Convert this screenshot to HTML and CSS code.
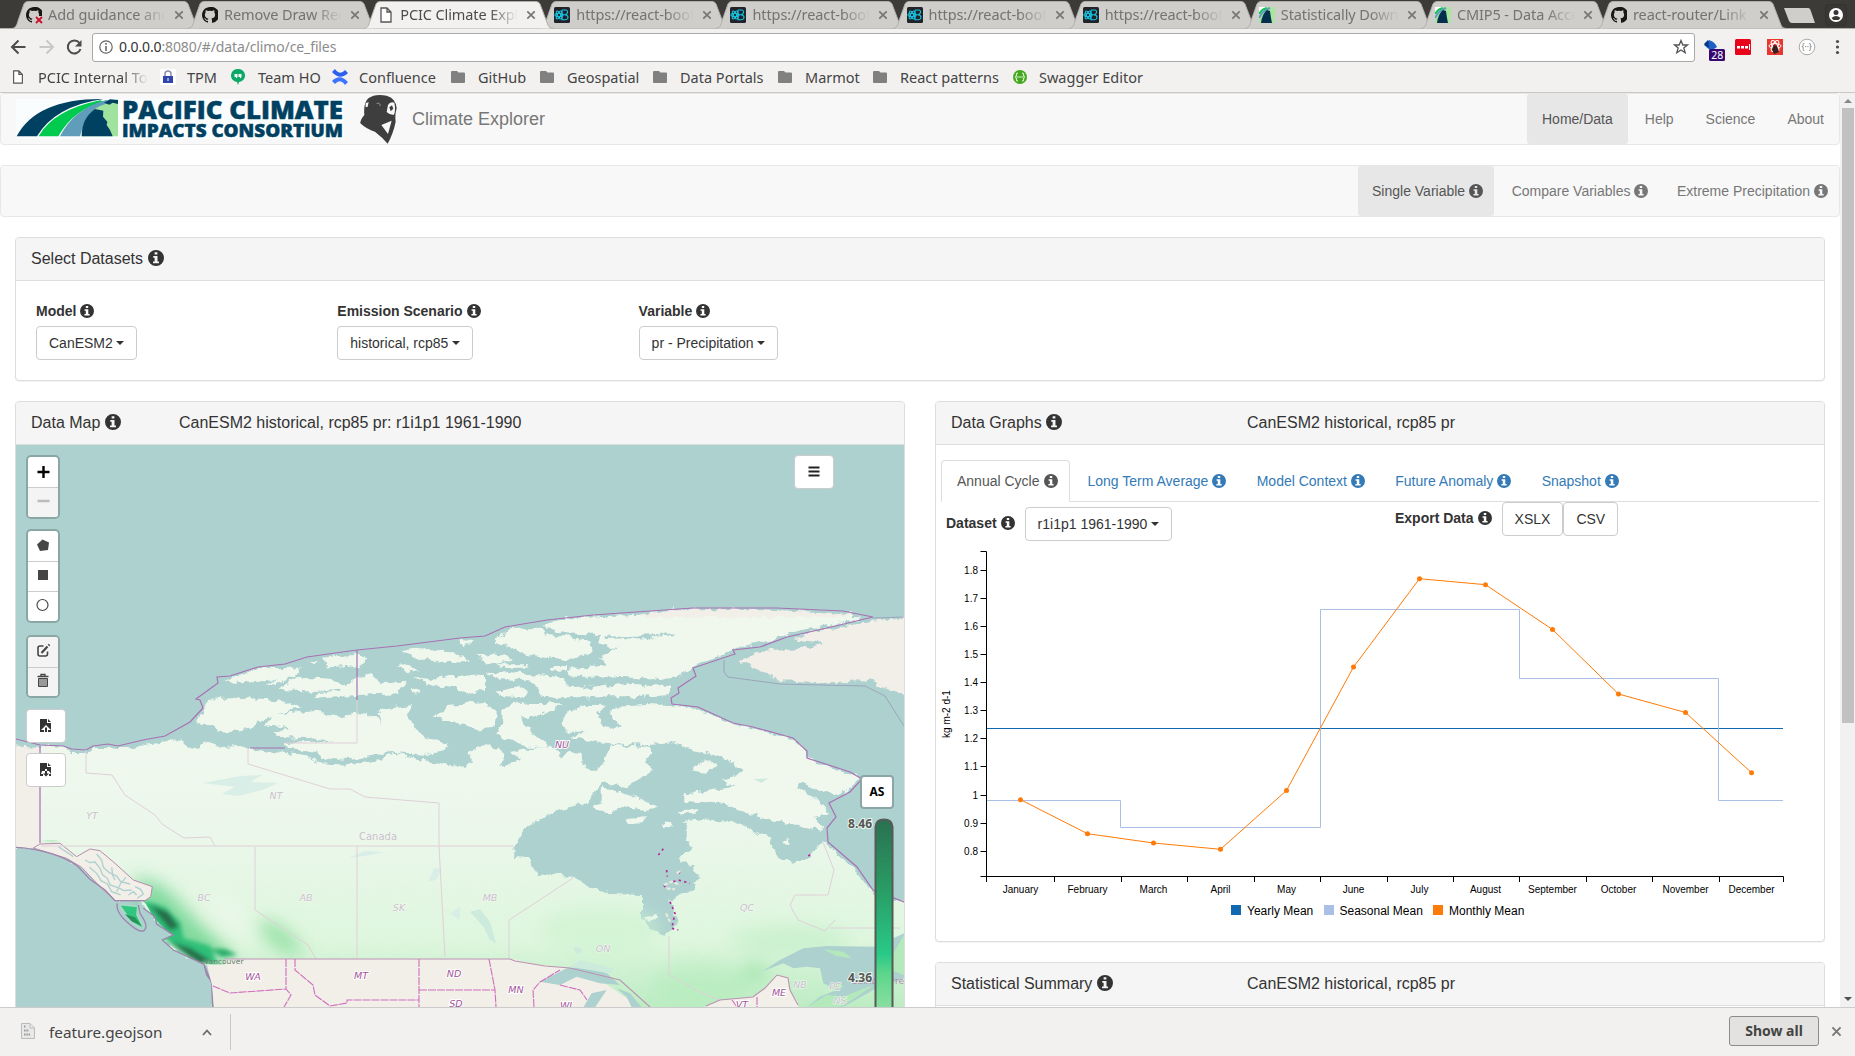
FILE: index.html
```html
<!DOCTYPE html>
<html lang="en">
<head>
<meta charset="utf-8">
<title>PCIC Climate Explorer</title>
<link rel="stylesheet" href="styles.css">
</head>
<body>
<svg class="defs" width="0" height="0">
  <symbol id="tab" viewBox="0 0 190 28"><path d="M0 27.5C5 27 5 22 7 17L12 3Q13 .5 16 .5H172Q175 .5 176 3L184 24Q185 27.5 189 27.5"/></symbol>
  <symbol id="info" viewBox="0 0 14 14"><path fill="currentColor" fill-rule="evenodd" d="M7 0a7 7 0 1 0 0 14A7 7 0 0 0 7 0ZM5.8 2h2.4v2H5.8ZM4.6 5.2h3.7v4.9h1.3v1.5H4.4v-1.5h1.4V6.7H4.6Z"/></symbol>
  <symbol id="x" viewBox="0 0 10 10"><path d="M1.3 1.3l7.4 7.4M8.7 1.3L1.3 8.7" stroke="#777" stroke-width="1.7"/></symbol>
  <symbol id="github" viewBox="0 0 16 16"><path fill="#191717" d="M8 0C3.6 0 0 3.6 0 8c0 3.5 2.3 6.500 5.500 7.600.4.100.500-.2.500-.4v-1.400c-2.200.500-2.700-1-2.700-1-.4-.9-.9-1.200-.9-1.200-.7-.5.1-.5.1-.5.800.1 1.200.8 1.200.8.7 1.300 1.900.9 2.300.7.1-.5.3-.9.500-1.100-1.800-.2-3.600-.9-3.600-4 0-.9.300-1.600.8-2.100-.1-.2-.4-1 .1-2.100 0 0 .7-.2 2.200.8a7.500 7.500 0 0 1 4 0c1.500-1 2.200-.8 2.200-.8.4 1.100.2 1.900.1 2.100.5.600.8 1.300.8 2.100 0 3.100-1.900 3.700-3.700 3.900.3.400.6.900.6 1.700v2.300c0 .2.100.5.600.4A8 8 0 0 0 8 0Z"/></symbol>
  <symbol id="react" viewBox="0 0 16 16"><rect width="16" height="16" rx="1.500" fill="#20232a"/><g fill="none" stroke="#16c4e0" stroke-width="1.100"><path d="M8 3H11.500Q14 3.200 13.500 5.500 13 7.500 11 7.700H8M11 7.700Q14.200 8 14 10.500 13.600 12.800 11 12.800H8V3"/><ellipse cx="5" cy="8" rx="4" ry="1.700"/><ellipse cx="5" cy="8" rx="4.500" ry="1.700" transform="rotate(60 5 8)"/><ellipse cx="5" cy="8" rx="4.500" ry="1.700" transform="rotate(-60 5 8)"/></g></symbol>
  <symbol id="pcic" viewBox="0 0 16 16"><rect width="16" height="16" fill="#a8e6a0"/><path fill="#fff" d="M0 0h8L0 12Z"/><path d="M0 7Q3 2 8 1" stroke="#08c94f" stroke-width="2" fill="none"/><path d="M0 11Q3 4 11 1" stroke="#5f9dbb" stroke-width="2" fill="none"/><path fill="#04304e" d="M2 16Q3 7 8 3L11 4 12 11 13 16Z"/></symbol>
  <symbol id="page" viewBox="0 0 12 16"><path fill="#fff" stroke="#555" stroke-width="1.300" d="M1 1H7L11 5V15H1ZM7 1V5H11"/></symbol>
  <symbol id="folder" viewBox="0 0 14 12"><path fill="#808080" d="M0 1Q0 0 1 0H6L7.500 1.500H13Q14 1.500 14 2.500V11Q14 12 13 12H1Q0 12 0 11Z"/></symbol>
</svg>
<div class="tabstrip">
  <div class="tab"><svg class="shape"><use href="#tab"/></svg><span class="fav"><svg><use href="#github"/></svg><svg class="fail" viewBox="0 0 8 8"><path d="M1 1l6 6M7 1L1 7" stroke="#c8102e" stroke-width="1.800"/></svg></span><span class="t">Add guidance and</span><svg class="close"><use href="#x"/></svg></div>
  <div class="tab"><svg class="shape"><use href="#tab"/></svg><span class="fav"><svg><use href="#github"/></svg></span><span class="t">Remove Draw Rec</span><svg class="close"><use href="#x"/></svg></div>
  <div class="tab active"><svg class="shape"><use href="#tab"/></svg><span class="fav"><svg><use href="#page"/></svg></span><span class="t">PCIC Climate Expl</span><svg class="close"><use href="#x"/></svg></div>
  <div class="tab"><svg class="shape"><use href="#tab"/></svg><span class="fav"><svg><use href="#react"/></svg></span><span class="t">https://react-boot</span><svg class="close"><use href="#x"/></svg></div>
  <div class="tab"><svg class="shape"><use href="#tab"/></svg><span class="fav"><svg><use href="#react"/></svg></span><span class="t">https://react-boot</span><svg class="close"><use href="#x"/></svg></div>
  <div class="tab"><svg class="shape"><use href="#tab"/></svg><span class="fav"><svg><use href="#react"/></svg></span><span class="t">https://react-boot</span><svg class="close"><use href="#x"/></svg></div>
  <div class="tab"><svg class="shape"><use href="#tab"/></svg><span class="fav"><svg><use href="#react"/></svg></span><span class="t">https://react-boot</span><svg class="close"><use href="#x"/></svg></div>
  <div class="tab"><svg class="shape"><use href="#tab"/></svg><span class="fav"><svg><use href="#pcic"/></svg></span><span class="t">Statistically Down</span><svg class="close"><use href="#x"/></svg></div>
  <div class="tab"><svg class="shape"><use href="#tab"/></svg><span class="fav"><svg><use href="#pcic"/></svg></span><span class="t">CMIP5 - Data Acce</span><svg class="close"><use href="#x"/></svg></div>
  <div class="tab"><svg class="shape"><use href="#tab"/></svg><span class="fav"><svg><use href="#github"/></svg></span><span class="t">react-router/Link</span><svg class="close"><use href="#x"/></svg></div>
  <svg class="newtab" viewBox="0 0 33 16"><path fill="#d0cecb" d="M1 0H25Q27 0 27.500 2L32 15H9Q7 15 6 13Z"/></svg>
  <svg class="user" viewBox="0 0 22 22"><rect x=".5" y=".5" width="21" height="21" rx="3" fill="#383733" stroke="#32312d"/><circle cx="11" cy="11" r="7" fill="#fff"/><circle cx="11" cy="8.500" r="2.500" fill="#383733"/><path d="M6.500 14Q11 10 15.500 14L13.500 16H8.500Z" fill="#383733"/></svg>
</div>
<div class="toolbar">
  <svg class="nav" viewBox="0 0 90 28" fill="none" stroke="#4c4c4c" stroke-width="2"><path d="M25 14H12M18 7.500L11.500 14 18 20.500"/><path stroke="#c9c8c6" d="M39 14H52M46 7.500L52.500 14 46 20.500"/><path d="M79 10A6.500 6.500 0 1 0 80 16"/><path fill="#4c4c4c" stroke="none" d="M81 7V13.500H74.500Z"/></svg>
  <div class="address"><svg viewBox="0 0 14 14"><circle cx="7" cy="7" r="6.200" fill="none" stroke="#666" stroke-width="1.200"/><path d="M7 3v1.700M7 6v5" stroke="#666" stroke-width="1.600"/></svg><span class="url"><b>0.0.0.0</b>:8080/#/data/climo/ce_files</span>
    <svg class="star" viewBox="0 0 16 16"><path fill="none" stroke="#555" stroke-width="1.300" d="M8 1.500L9.800 6H14.500L10.800 9 12.200 13.800 8 11 3.800 13.800 5.200 9 1.500 6H6.200Z"/></svg></div>
  <svg class="exts" viewBox="0 0 160 28"><path d="M9 12L14 7Q20 9 22 14L16 18Z" fill="#1d5fc4"/><path d="M9 11L13 7 14 15Z" fill="#08357e"/><rect x="14" y="16" width="16" height="12" rx="1.500" fill="#37096f"/><text x="16.300" y="26" font-size="10.500" fill="#fff" font-family="Noto Sans">28</text><rect x="40" y="6" width="16" height="16" rx="1.500" fill="#e8031a"/><path fill="#fff" d="M42 13h3v2.500h-3zM46 13h3v2.500h-3zM50 13h3v2.500h-3zM54 11h1v6h-1z"/><rect x="72" y="6" width="16" height="16" fill="#e8372f"/><g fill="none" stroke="#fff"><ellipse cx="80" cy="13" rx="6" ry="2.500"/><ellipse cx="80" cy="13" rx="6" ry="2.500" transform="rotate(60 80 13)"/><ellipse cx="80" cy="13" rx="6" ry="2.500" transform="rotate(120 80 13)"/></g><path fill="#33211f" d="M79 12l3 1 2 6-5 2-2-5z"/><circle cx="112" cy="14" r="7.800" fill="#fff" stroke="#aaa"/><text x="106.500" y="17" font-size="8" fill="#777" font-family="Noto Sans">{··}</text><g fill="#4c4c4c"><circle cx="142.500" cy="8.500" r="1.600"/><circle cx="142.500" cy="14" r="1.600"/><circle cx="142.500" cy="19.500" r="1.600"/></g></svg>
</div>
<div class="bookmarks">
  <span class="bm"><svg class="pg"><use href="#page"/></svg><span class="fade">PCIC Internal Tool</span></span>
  <span class="bm"><svg viewBox="0 0 16 16"><rect width="16" height="16" fill="#fff"/><path d="M5 8V5a3 3 0 0 1 6 0V8" fill="none" stroke="#8b8fae" stroke-width="1.500"/><rect x="3" y="7" width="10" height="7" fill="#3046aa"/><path d="M8 9v3" stroke="#fff"/></svg>TPM</span>
  <span class="bm"><svg viewBox="0 0 16 16"><path d="M7 0a6.500 6.500 0 0 1 1 13L7 16 6 13A6.500 6.500 0 0 1 7 0Z" fill="#0ba968"/><path fill="#fff" d="M3.500 5h3v3l-1.500 1.500V8H3.500ZM7.500 5h3v3L9 9.500V8H7.500Z"/></svg>Team HO</span>
  <span class="bm"><svg viewBox="0 0 16 16"><path d="M0 3L3 0Q8 7 13 1L16 4Q8 12 0 3Z" fill="#2c60ee"/><path d="M16 13L13 16Q8 9 3 15L0 12Q8 4 16 13Z" fill="#3c74ff"/></svg>Confluence</span>
  <span class="bm"><svg class="fo"><use href="#folder"/></svg>GitHub</span>
  <span class="bm"><svg class="fo"><use href="#folder"/></svg>Geospatial</span>
  <span class="bm"><svg class="fo"><use href="#folder"/></svg>Data Portals</span>
  <span class="bm"><svg class="fo"><use href="#folder"/></svg>Marmot</span>
  <span class="bm"><svg class="fo"><use href="#folder"/></svg>React patterns</span>
  <span class="bm"><svg viewBox="0 0 16 16"><circle cx="8" cy="8" r="7" fill="#45a71d"/><path d="M6 4Q4 4 4.500 6.500L3.500 8 4.500 9.500Q4 12 6 12M10 4Q12 4 11.500 6.500L12.500 8 11.500 9.500Q12 12 10 12M5 8H11" stroke="#d5efc8" fill="none" stroke-width="1.200"/></svg>Swagger Editor</span>
</div>
<div class="viewport">
<main>
  <nav class="navbar">
    <svg class="logo" viewBox="0 0 400 51" width="400" height="51">
      <rect x="16" y="5" width="328" height="40" fill="#fafdfe"/>
      <g transform="translate(0 -4) scale(.33333)">
        <path fill="#004162" d="M50 139Q110 25 310 27Q165 48 111 139Z"/>
        <path fill="#00cb4e" d="M116 139Q160 60 300 31L315 35Q220 57 175 139Z"/>
        <path fill="#5f9dbb" d="M180 139Q220 58 318 30L340 35Q260 58 240 139Z"/>
        <path fill="#9fe39f" d="M354 28V139H245Q252 70 300 48Z"/>
        <path fill="#004162" d="M245 139Q245 85 285 57L310 62 309 80 322 95 320 105 330 120 338 139ZM312 38L330 28 354 30V42L338 38 328 44Z"/>
      </g>
      <g fill="#004162" stroke="#004162" stroke-width=".5" font-family="Open Sans" font-weight="800"><text x="122" y="24.500" font-size="25.500" textLength="221" lengthAdjust="spacingAndGlyphs">PACIFIC CLIMATE</text><text x="122" y="42.500" font-size="18" textLength="221" lengthAdjust="spacingAndGlyphs">IMPACTS CONSORTIUM</text></g>
      <g transform="translate(0 -4) scale(.33333)"><path fill="#3e3e3e" d="M1105 25Q1125 10 1160 17 1188 25 1190 55 1184 75 1187 95 1180 130 1163 161 1148 143 1125 125 1100 118 1081 100 1080 90 1093 75 1090 38 1105 25Z"/><path fill="#f8f8f8" d="M1164 45Q1170 34 1183 38 1188 60 1182 74 1170 76 1160 66ZM1144 105L1175 92 1164 132ZM1097 40L1106 36 1103 50 1097 52Z"/><path fill="#3e3e3e" d="M1168 52L1176 46 1180 56 1172 64Z"/><path d="M1130 40Q1142 38 1140 48" stroke="#999" stroke-width="3" fill="none"/></g>
    </svg>
    <span class="brand">Climate Explorer</span>
    <div class="links"><a class="on">Home/Data</a><a>Help</a><a>Science</a><a>About</a></div>
  </nav>
  <nav class="navbar"><div class="links sub"><a class="on">Single Variable <svg class="i"><use href="#info"/></svg></a><a>Compare Variables <svg class="i"><use href="#info"/></svg></a><a>Extreme Precipitation <svg class="i"><use href="#info"/></svg></a></div></nav>
  <div class="content">
    <section class="panel select">
      <h4>Select Datasets <svg class="i"><use href="#info"/></svg></h4>
      <div class="selectors">
        <div><label>Model <svg class="i"><use href="#info"/></svg></label><button class="btn">CanESM2 <i class="caret"></i></button></div>
        <div><label>Emission Scenario <svg class="i"><use href="#info"/></svg></label><button class="btn">historical, rcp85 <i class="caret"></i></button></div>
        <div><label>Variable <svg class="i"><use href="#info"/></svg></label><button class="btn">pr - Precipitation <i class="caret"></i></button></div>
      </div>
    </section>
    <div class="columns">
      <section class="panel mapp">
        <h4><span class="c1">Data Map <svg class="i"><use href="#info"/></svg></span><span>CanESM2 historical, rcp85 pr: r1i1p1 1961-1990</span></h4>
        <div class="map">
          <svg class="canvas" viewBox="16 445 888 562" width="888" height="562">
            <defs>
              <linearGradient id="land" x1="0" y1="740" x2="0" y2="1007" gradientUnits="userSpaceOnUse"><stop offset="0" stop-color="#f0f8ee"/><stop offset=".35" stop-color="#ebf7ea"/><stop offset=".75" stop-color="#def6de"/><stop offset="1" stop-color="#bdecc3"/></linearGradient>
              <linearGradient id="bar" x1="0" y1="0" x2="0" y2="1"><stop offset="0" stop-color="#2a7151"/><stop offset=".35" stop-color="#289b63"/><stop offset=".7" stop-color="#29c988"/><stop offset=".8" stop-color="#5cd68b"/><stop offset="1" stop-color="#8fe0a4"/></linearGradient>
              <filter id="rough" x="0" y="0" width="1" height="1"><feTurbulence type="fractalNoise" baseFrequency=".13" numOctaves="3" seed="4"/><feDisplacementMap in="SourceGraphic" scale="8" xChannelSelector="R" yChannelSelector="G"/></filter>
              <filter id="soft" x="-.5" y="-.5" width="2" height="2"><feGaussianBlur stdDeviation="9"/></filter>
              <filter id="soft2" x="-.5" y="-.5" width="2" height="2"><feGaussianBlur stdDeviation="2"/></filter>
              <clipPath id="west"><path d="M138 1007V897L146 904 154 918 166 930 172 935 162 940 187 957 204 964 226 965 225 959H520V840H41Z"/></clipPath>
            </defs>
            <rect x="16" y="445" width="888" height="562" fill="#add1cf"/>
            <g filter="url(#rough)">
              <rect x="16" y="445" width="888" height="562" fill="none"/>
              <path fill="#f2eee8" d="M10 745L41 747V845L60 847 10 847Z"/>
              <path fill="url(#land)" d="M41 745L63 747 72 753 87 753 95 748 133 748 143 745 167 742 172 738 183 742 192 750 200 747 207 742 220 747 240 746 250 749 273 752 307 755 318 763 350 765 380 760 393 753 413 757 433 763 467 767 473 760 467 753 483 745 500 748 505 757 500 767 520 760 510 752 523 750 545 746 560 752 561 760 566 752 570 750 583 757 582 765 593 772 603 765 610 745 650 747 652 753 645 762 653 770 637 780 627 787 603 782 593 793 587 803 557 810 527 827 515 843 514 857 530 858 537 875 557 874 573 878 593 888 613 894 642 895 642 918 653 930 665 936 678 925 673 908 668 900 693 890 700 878 693 867 678 858 691 847 687 840 688 832 684 822 693 819 733 821 760 835 773 836 771 847 777 855 793 863 808 857 823 842 830 848 853 867 865 885 875 893 910 905V1010H212L213 980 206 964 187 957 162 940 172 935 154 918 138 900 115 900 82 867 41 845Z"/>
              <g transform="translate(200 600) scale(.33333)" fill="#f0f8ee">
                <path d="M0 345L25 300 110 293 200 297 310 320 240 340 200 355 150 385 75 400 40 380 -15 370ZM195 375L220 345 350 330 380 345 430 350 470 338 530 350 545 375 530 330 640 318 620 345 650 390 680 415 750 430 740 445 680 465 580 455 450 480 360 475 350 455 270 445 250 430 400 422 330 415 230 410 215 400 270 385Z"/>
                <path d="M75 240L170 205 300 203 280 230 240 250 190 258 230 240 120 250ZM238 270L290 232 400 240 460 265 350 275ZM460 240L510 220 545 245 615 250 590 280 470 285 340 293 350 280 420 272ZM320 185L360 187 340 195ZM370 173L470 162 495 172 480 198 380 205ZM607 150L650 143 760 155 810 185 740 190 680 175 650 178 625 160ZM590 193L620 195 665 215 620 212ZM640 230L700 240 750 225 855 228 855 270 800 280 760 262 700 260ZM635 268L665 265 660 278 635 276ZM830 162L900 165 940 180 890 192 845 185ZM895 193L985 193 980 203 900 203ZM860 215L980 220 985 240 900 238ZM885 275L960 262 985 275 970 292 900 288ZM775 120L820 123 820 134 780 132ZM695 345L730 340 745 315 860 305 890 345 880 380 820 390 780 370 720 355ZM1050 198H1095V212H1050Z"/>
              </g>
              <g transform="translate(460 580) scale(.33333)" fill="#f0f8ee">
                <path d="M245 135L330 112 530 105 640 90 900 92 1060 95 1200 110 1190 120 1100 135 1000 155 900 190 830 205 790 225 720 250 650 290 600 300 480 290 330 290 320 270 440 255 420 235 470 205 415 190 420 165 310 160ZM100 185L150 148 240 143 260 165 330 170 390 185 395 215 350 235 300 240 200 225 150 200ZM130 275L290 290 330 318 520 312 630 318 630 345 520 352 250 352 225 310Z"/>
                <path fill="#f2eee8" d="M530 107L640 88 900 88 1180 103 1150 112 560 112ZM835 238L900 215 1020 208 1100 190 1000 178 1060 155 1170 135 1350 110V350L1290 330 1220 300 1130 310 960 300 890 270Z"/>
                <path d="M305 430L320 395 380 375 440 374 415 400 430 440 480 440 445 400 470 380 560 375 680 380 740 400 830 435 900 450 980 470 1030 500 1040 530 1100 560 1190 590 1200 600 1140 650 1080 630 1020 605 1010 620 1100 680 1110 700 1060 710 1090 750 1000 735 900 710 800 675 670 665 680 640 830 620 785 605 850 575 800 535 700 510 640 490 560 495 450 490 330 475 380 455 320 455ZM130 390L160 368 310 370 250 405 180 410 190 430 220 460 270 500 200 500 140 480 105 460 130 430ZM425 620L490 640 600 680 560 690 480 680 445 700 395 685 425 670ZM495 720L555 708 540 730 505 733ZM605 735L630 722 635 740 615 748ZM700 560L740 540 768 555 740 578 700 572ZM970 780L988 778 985 792 972 790ZM550 1010L590 1005 590 1020 560 1022ZM655 690L715 688 710 698 660 700Z"/>
                <path fill="#add1cf" d="M430 170L590 165 640 160 640 165 560 175 440 176ZM370 320L500 300 620 302 620 308 500 308 380 326Z"/>
              </g>
            </g>
            <g clip-path="url(#west)">
              <g filter="url(#soft)"><path d="M135 875L165 888 200 925 235 955 200 965 140 905Z" fill="#62d188" opacity=".8"/><ellipse cx="280" cy="938" rx="26" ry="9" transform="rotate(38 280 938)" fill="#8fe0a0"/><ellipse cx="230" cy="915" rx="28" ry="12" transform="rotate(50 230 915)" fill="#eaf8e9"/></g>
              <g filter="url(#soft2)"><path d="M144 900L165 907 180 922 184 938 210 946 218 965 190 958 160 935 145 915Z" fill="#2fbf78"/><path d="M150 905L168 912 179 927 170 930ZM170 942L190 948 210 960 200 964Z" fill="#286d4a"/><path d="M210 949L225 949 238 955 222 957Z" fill="#25ad67"/><path d="M42 833L56 838 58 842 44 840Z" fill="#a5e4b0"/></g>
            </g>
            <g filter="url(#soft)" opacity=".6"><ellipse cx="755" cy="972" rx="12" ry="8" fill="#74d98a"/><ellipse cx="600" cy="930" rx="60" ry="25" fill="#cdf3d0"/><ellipse cx="700" cy="985" rx="50" ry="22" fill="#b4ecbc"/><ellipse cx="790" cy="940" rx="60" ry="15" fill="#bfeec5"/></g>
            <g transform="translate(0 780) scale(.33333)">
              <path fill="#f2eee8" stroke="#b68dad" stroke-width="3" d="M120 192L180 190 230 230 270 207 300 212 345 250 400 300 457 320 452 350 435 362H345L300 320 245 262 200 235 100 204Z"/>
              <path fill="none" stroke="#add1cf" stroke-width="4" d="M255 240L270 248 285 246 300 265 308 285 322 295 330 315 352 322 372 332 395 330M268 262L290 280 305 305M290 222L305 240 310 262 328 278 350 288 362 305 390 312M335 262L338 285 345 300M300 300L322 312 335 335 362 345M378 292L362 310 350 335M405 320L422 328 430 342 412 355M385 345L400 335 410 345M175 200L190 210 220 230"/>
              <path fill="#31c67f" stroke="#bde5c8" stroke-width="2" d="M360 375L412 380 410 405 430 445 395 425Z"/><path fill="#269259" d="M375 403L405 412 425 438 395 424Z"/>
              <g fill="none" stroke="#9d85ad" stroke-width="4"><path d="M48 202Q160 210 230 256L270 298 315 330 345 362H435M352 370Q345 395 385 430T435 448Q445 435 420 400L415 375M430 385L465 410 470 432 520 465 487 480 520 510 612 553 635 610 638 682M612 553L620 585 645 620 643 682"/></g>
            </g>
            <g fill="#f2eee8">
              <path d="M207 965L225 965 225 959H514L527 963 567 968 600 980 640 1007H214L212 985Z"/>
              <path d="M705 1007L720 1000 753 997 765 988 777 975 788 978 790 990 798 1002V1007Z"/>
            </g>
            <g transform="translate(460 580) scale(.33333)">
              <path fill="#add1cf" d="M240 1205L320 1165 370 1160 440 1180 480 1215 420 1210 350 1190 300 1215ZM370 1282L395 1240 440 1230 420 1260 405 1282ZM470 1225L510 1240 545 1282H515L500 1250Z"/>
              <path fill="#add1cf" d="M905 1175L960 1140 1030 1105 1100 1098 1245 1100 1332 1060V1195L1240 1230 1160 1275 1145 1282H1040L1080 1250 1130 1230 1090 1210 1080 1165 1040 1160 1000 1165 970 1150Z"/>
              <path fill="#b4eabb" d="M1332 1065L1300 1120 1290 1170 1332 1185ZM1090 1108L1150 1115 1175 1135 1130 1128ZM1040 1282L1100 1245 1150 1250 1240 1215 1190 1250 1140 1282ZM1105 1215L1140 1210 1150 1222 1120 1228Z"/>
              <path fill="#cdebdd" d="M30 995L60 988 90 1025 108 1090 90 1080 70 1040ZM340 1105Q350 1095 362 1105T350 1122ZM330 1160L360 1140 460 1165 450 1180ZM880 598L925 595 905 608Z"/>
              <path fill="none" stroke="#b7299c" stroke-width="5" stroke-dasharray="7 10" d="M595 825L615 800M620 870L622 890M655 875L665 885M640 905L655 900 690 910M612 915L620 930M630 965L645 1000 635 1045 655 1050M1045 828L1055 820"/>
              <path fill="none" stroke="#e6e9dd" stroke-width="7" stroke-dasharray="12 5" d="M612 915L635 905 660 915M650 880L665 870M620 925L645 928M618 1000L630 1025"/>
            </g>
            <path fill="#d9eee7" d="M203 783L240 776 262 775 250 782 278 783 262 790 238 796 222 794 235 787ZM348 858L365 851 383 852 365 856ZM428 882L434 868 442 869 436 880ZM450 914L460 906 460 920Z"/>
            <g fill="none" stroke="#a871b4" stroke-width="1.200">
              <path d="M16 739L40 745 63 746 72 749 86 750 93 746 108 744 118 746 143 740 165 736 190 722 203 708 200 700 196 699 218 683 217 677 230 676 258 667 285 664 307 657 357 650 397 646 460 638 485 636 505 627 547 620 593 615 693 608 777 608 843 611 873 617 827 628 787 637 760 647 733 650 735 654 693 668 696 676 678 688 679 693 671 698 672 704 698 707 733 723 753 727 793 738 807 751 807 758 850 772 862 779 850 792 829 803 836 817 827 828 828 842 857 867 873 890 904 902"/>
              <path stroke="#9998b5" stroke-width=".8" d="M724 660V672L728 677 780 684 865 686 885 696 904 726M873 618L904 617"/>
              <path d="M357 650V700M40 746V843M250 748H285"/>
            </g>
            <g fill="none" stroke="#e0d0d8" stroke-width="1"><path d="M357 700V743H285M248 749V764L330 789H350L365 797 439 803V846M86 750V773L112 775 125 795 155 815 162 824 184 838 210 837 215 846M41 846H514M255 847V910L285 930 308 945 316 959M357 847V959M439 846L445 957M509 958V920L573 878M669 936V975L700 992 720 1000M823 842L834 870 828 895 795 895 790 905 798 920 825 931 835 920M830 928H900"/></g>
            <g fill="none" stroke="#cf6fbe" stroke-width="1.100"><path stroke="#bb93b3" d="M225 959H510L515 961 545 966 570 968 620 980 650 1007M706 1006L720 1000 753 997 765 988 777 975 788 978 790 990 798 1005"/><path d="M213 986L230 993 286 989 291 995 284 1007M286 959V989M295 959V970L313 985 315 995 330 1006 347 1003V1000H419M419 959V1007M419 990H495M489 959L495 990 496 1007M534 1007L533 990 540 982 560 970M560 985L580 990 587 1000M732 1000L737 1007M757 997V1007" stroke-dasharray="8 1"/></g>
            <g class="place faint"><text x="92" y="819">YT</text><text x="276" y="799">NT</text><text x="204" y="901">BC</text><text x="306" y="901">AB</text><text x="399" y="911">SK</text><text x="490" y="901">MB</text><text x="603" y="952">ON</text><text x="747" y="911">QC</text><text x="800" y="988">NB</text><text x="835" y="990">PE</text><text x="840" y="1004">NS</text><text x="378" y="840" class="ca">Canada</text></g>
            <g class="place"><text x="562" y="748">NU</text><text x="253" y="980">WA</text><text x="361" y="979">MT</text><text x="454" y="977">ND</text><text x="456" y="1007">SD</text><text x="516" y="993">MN</text><text x="566" y="1009">WI</text><text x="779" y="996">ME</text><text x="742" y="1008">VT</text></g>
            <text x="204" y="964" class="city">Vancouver</text><text x="852" y="984" class="city pink">Saint-Pierre</text>
            <path d="M875.500 1012V827Q876 819.500 884 819.500T892.500 827V1012Z" fill="url(#bar)" stroke="#565b58" stroke-width="2"/>
            <g class="lab"><text x="872" y="828">8.46</text><text x="872" y="982">4.36</text></g>
          </svg>
          <div class="bars">
            <div class="bar zoom"><span><svg viewBox="0 0 30 30"><path d="M15.500 9V21M9.500 15H21.500" stroke="#000" stroke-width="2.400"/></svg></span><span class="off"><svg viewBox="0 0 30 30"><path d="M9.500 15H21.500" stroke="#bbb" stroke-width="2.400"/></svg></span></div>
            <div class="bar draw"><span><svg viewBox="0 0 30 30"><path fill="#464646" d="M9 13.500L14.500 8.500 21 11.500 20 19 12 20Z"/></svg></span><span><svg viewBox="0 0 30 30"><path fill="#464646" d="M10 10H20V20H10Z"/></svg></span><span><svg viewBox="0 0 30 30"><circle cx="14.500" cy="15" r="5.500" fill="none" stroke="#464646" stroke-width="1.200"/></svg></span></div>
            <div class="bar edit"><span class="off"><svg viewBox="0 0 30 30"><path fill="none" stroke="#464646" stroke-width="1.600" d="M15.500 9H12Q10 9 10 11V17Q10 19 12 19H17.500Q19.500 19 19.500 17V14.500"/><path stroke="#464646" stroke-width="2.200" d="M13.500 16L19.500 9.500M20.500 8.500L21.500 7.500"/></svg></span><span class="off"><svg viewBox="0 0 30 30"><path fill="none" stroke="#464646" stroke-width="1.300" d="M9.500 10.500H20.500M13 10V8.500H17V10"/><path fill="#999" stroke="#464646" d="M10.500 12.500H19.500V20.500H10.500Z"/></svg></span></div>
            <div class="mb"><svg viewBox="0 0 14 14"><path fill="#333" d="M1 0H8V4H12V13H9V11H12L7 6 2 11H5V13H1ZM9 0L12 3H9ZM6 9L7 8 8 9V13H6Z"/></svg></div>
            <div class="mb two"><svg viewBox="0 0 14 14"><path fill="#333" fill-rule="evenodd" d="M1 0H8V4H12V13H10V11H12L10 8H8V6H6V8H3L2 11H4V13H1ZM9 0L12 3H9ZM6 8H8V10.500H10L7 13.500 4 10.500H6Z"/></svg></div>
          </div>
          <div class="mb menu"><svg viewBox="0 0 14 14"><path d="M1.500 2.500H12.500M1.500 6.500H12.500M1.500 10.500H12.500" stroke="#222" stroke-width="1.800"/></svg></div>
          <div class="as">AS</div>
        </div>
      </section>
      <div class="right">
        <section class="panel graphs">
          <h4><span class="c2">Data Graphs <svg class="i"><use href="#info"/></svg></span><span>CanESM2 historical, rcp85 pr</span></h4>
          <div class="tabs"><a class="cur">Annual Cycle <svg class="i"><use href="#info"/></svg></a><a>Long Term Average <svg class="i"><use href="#info"/></svg></a><a>Model Context <svg class="i"><use href="#info"/></svg></a><a>Future Anomaly <svg class="i"><use href="#info"/></svg></a><a>Snapshot <svg class="i"><use href="#info"/></svg></a></div>
          <div class="controls">
            <div class="ds"><label>Dataset <svg class="i"><use href="#info"/></svg></label><button class="btn">r1i1p1 1961-1990 <i class="caret"></i></button></div>
            <div class="ex"><label>Export Data <svg class="i"><use href="#info"/></svg></label><button class="btn">XSLX</button><button class="btn">CSV</button></div>
          </div>
          <svg class="chart" viewBox="936 545 888 390" width="888" height="390">
            <g fill="none" stroke="#000"><path d="M980.500 551.500H986.500V876.500H980.500M986.500 876.500H1783.500V882"/><path d="M986.500 876V882M1054.500 876V882M1121.500 876V882M1187.500 876V882M1254.500 876V882M1320.500 876V882M1387.500 876V882M1453.500 876V882M1519.500 876V882M1586.500 876V882M1652.500 876V882M1719.500 876V882"/><path d="M980.500 570.500H986M980.500 598.500H986M980.500 626.500H986M980.500 654.500H986M980.500 682.500H986M980.500 710.500H986M980.500 738.500H986M980.500 766.500H986M980.500 795.500H986M980.500 823.500H986M980.500 851.500H986"/></g>
            <g class="yt"><text x="978" y="574">1.8</text><text x="978" y="602">1.7</text><text x="978" y="630">1.6</text><text x="978" y="658">1.5</text><text x="978" y="686">1.4</text><text x="978" y="714">1.3</text><text x="978" y="742">1.2</text><text x="978" y="770">1.1</text><text x="978" y="799">1</text><text x="978" y="827">0.9</text><text x="978" y="855">0.8</text></g>
            <g class="xt"><text x="1020.500" y="893">January</text><text x="1087.500" y="893">February</text><text x="1153.500" y="893">March</text><text x="1220.500" y="893">April</text><text x="1286.500" y="893">May</text><text x="1353.500" y="893">June</text><text x="1419.500" y="893">July</text><text x="1485.500" y="893">August</text><text x="1552.500" y="893">September</text><text x="1618.500" y="893">October</text><text x="1685.500" y="893">November</text><text x="1751.500" y="893">December</text><text transform="translate(950 714) rotate(-90)">kg m-2 d-1</text></g>
            <path fill="none" stroke="#1169b1" d="M987 728.500H1783"/>
            <path fill="none" stroke="#a9bfe6" d="M987 800.500H1120.500V827.500H1320.500V609.500H1519.500V678.500H1718.500V800.500H1783"/>
            <polyline fill="none" stroke="#ff7b07" marker-start="url(#dot)" marker-mid="url(#dot)" marker-end="url(#dot)" points="1020.500,799.700 1087.500,833.700 1153.500,843 1220.500,849.300 1286.500,790.500 1353.500,667 1419.500,578.700 1485.500,584.700 1552.500,629.500 1618.500,694 1685.500,712.500 1751.500,772.700"/>
            <defs><marker id="dot" markerWidth="6" markerHeight="6" refX="3" refY="3"><circle cx="3" cy="3" r="2.500" fill="#ff7b07"/></marker></defs>
            <path fill="#1169b1" d="M1231 905h10v10h-10z"/><path fill="#a9bfe6" d="M1324 905h10v10h-10z"/><path fill="#ff7b07" d="M1433 905h10v10h-10z"/>
            <g class="leg"><text x="1247" y="915">Yearly Mean</text><text x="1339.500" y="915">Seasonal Mean</text><text x="1449" y="915">Monthly Mean</text></g>
          </svg>
        </section>
        <section class="panel stat"><h4><span class="c2">Statistical Summary <svg class="i"><use href="#info"/></svg></span><span>CanESM2 historical, rcp85 pr</span></h4></section>
      </div>
    </div>
  </div>
</main>
<div class="scroll"><i class="up"></i><div class="thumb"></div><i class="down"></i></div>
</div>
<footer>
  <svg class="file" viewBox="0 0 16 18"><path fill="#e8e8e8" stroke="#bbb" d="M1.500 1.500H10L14.500 6V16.500H1.500ZM10 1.500V6H14.500"/><path d="M4 4.500h2M4 8.500h5M4 12.500h6" stroke="#999" stroke-width="2" stroke-dasharray="1.500 .8"/></svg>
  <span class="fname">feature.geojson</span><svg class="chev" viewBox="0 0 10 7"><path d="M1 6L5 1.500 9 6" fill="none" stroke="#6b6b6b" stroke-width="1.800"/></svg><span class="sep"></span>
  <span class="showall">Show all</span><svg class="fx"><use href="#x"/></svg>
</footer>
</body>
</html>
```
FILE: styles.css
```css
* { box-sizing: border-box; }
body { margin: 0; width: 1855px; height: 1056px; overflow: hidden; display: flex; flex-direction: column; background: #fff; color: #333; font: 14px/20px "Liberation Sans", Arial, sans-serif; }
svg { display: block; flex: none; }
.defs { position: absolute; }
.tabstrip, .toolbar, .bookmarks, footer { font-family: "Noto Sans", sans-serif; flex: none; display: flex; align-items: center; background: #f2f1f0; }

.tabstrip { height: 29px; padding: 1px 0 0 12px; background: #3c3b37; align-items: flex-start; border-bottom: 1px solid #b1afac; }
.tab { position: relative; width: 190px; height: 28px; margin-right: -13.900px; display: flex; align-items: center; padding-left: 14px; color: #737373; font-size: 14.500px; }
.shape { position: absolute; left: 0; top: 0; width: 190px; height: 28px; fill: #d0cecb; stroke: #b1afac; }
.active { z-index: 2; color: #4c4c4c; }
.active .shape { fill: #f2f1f0; }
.fav { position: relative; width: 16px; height: 16px; margin-right: 6px; }
.fav svg { width: 16px; height: 16px; }
.fav .fail { position: absolute; width: 8px; height: 8px; right: -1px; bottom: -1px; background: #d0cecb; }
.t { position: relative; top: -1px; width: 119px; overflow: hidden; white-space: nowrap; letter-spacing: -.1px; -webkit-mask-image: linear-gradient(90deg, #000 75%, transparent 99%); mask-image: linear-gradient(90deg, #000 75%, transparent 99%); }
.close { position: relative; width: 10px; height: 10px; margin-left: 7px; }
.newtab { width: 33px; height: 16px; margin: 7px 0 0 10px; }
.user { width: 22px; height: 22px; margin: 3px 0 0 9px; }

.toolbar { height: 35px; padding-top: 1px; }
.nav { width: 91px; height: 28px; margin-right: 1px; }
.address { width: 1603px; height: 29px; border: 1px solid #aaa8a6; border-radius: 3px; background: #fff; display: flex; align-items: center; padding: 0 5px 0 6px; }
.address > svg { width: 14px; height: 14px; }
.url { margin-left: 6px; flex: 1; color: #8c8c8c; font-size: 14px; letter-spacing: -.12px; }
.url b { font-weight: 400; color: #333; }
.address .star { width: 16px; height: 16px; }
.exts { width: 160px; height: 28px; }

.bookmarks { height: 29px; border-bottom: 1px solid #c9c8c6; padding: 0 0 2px 12px; display: grid; grid-template-columns: 148px 71px 101px 119px 89px 113px 125px 95px 139px 200px; font-size: 14.500px; color: #444; }
.bm { display: flex; align-items: center; white-space: nowrap; }
.bm svg { width: 16px; height: 16px; margin-right: 11px; }
.bm .fo { width: 14px; height: 12px; margin-right: 13px; }
.bm .pg { width: 12px; height: 14px; margin-right: 14px; }
.fade { width: 110px; overflow: hidden; -webkit-mask-image: linear-gradient(90deg, #000 78%, transparent); mask-image: linear-gradient(90deg, #000 78%, transparent); }

.viewport { flex: 1; min-height: 0; display: flex; }
main { width: 1840px; overflow: hidden; }
.navbar { height: 52px; margin-bottom: 20px; border: 1px solid #e7e7e7; border-radius: 4px; background: #f8f8f8; display: flex; align-items: center; }
.logo { margin: 0 0 0 -1px; }
.brand { font-size: 18px; color: #777; margin-left: 12px; }
.links { margin-left: auto; display: flex; height: 50px; gap: 2px; }
.links a { padding: 15px; color: #777; display: flex; align-items: center; gap: 4px; }
.links a.on { background: #e7e7e7; color: #555; border-radius: 3px; }
.links.sub { gap: 3px; }
.links.sub a { padding: 15px 11px 15px 14.500px; }
.i { width: 14px; height: 14px; }
.content { padding: 0 15px; }
.panel { border: 1px solid #ddd; border-radius: 4px; background: #fff; box-shadow: 0 1px 1px rgba(0,0,0,.05); }
h4 { margin: 0; height: 43px; background: #f5f5f5; border-bottom: 1px solid #ddd; border-radius: 3px 3px 0 0; padding: 0 15px 1px; display: flex; align-items: center; gap: 5px; font-size: 16px; font-weight: 400; }
h4 .i { width: 16px; height: 16px; margin-top: -1px; }
h4 span { display: flex; align-items: center; gap: 4.500px; }
.c1 { width: 143px; }
.c2 { width: 291px; }
label { font-weight: 700; display: flex; align-items: center; gap: 4px; }
.btn { height: 34px; border: 1px solid #ccc; border-radius: 4px; background: #fff; color: #333; padding: 0 12px 0 12px; font: 14px "Liberation Sans", Arial, sans-serif; display: flex; align-items: center; gap: 3.500px; white-space: nowrap; }
.caret { border-top: 4px solid #333; border-left: 4px solid transparent; border-right: 4px solid transparent; }
.select { height: 144px; margin-bottom: 20px; }
.selectors { display: grid; grid-template-columns: repeat(6, 301.300px); padding: 20px; }
.selectors label { margin-bottom: 5px; }
.columns { display: flex; justify-content: space-between; }
.mapp, .right { width: 890px; }
.mapp { height: 700px; overflow: hidden; }
.map { position: relative; height: 656px; background: #add1cf; }
.canvas { width: 888px; height: 562px; }
.place text { font: italic 9.500px "DejaVu Sans", sans-serif; text-anchor: middle; fill: #a3539b; stroke: #fff; stroke-width: 2px; paint-order: stroke; }
.place.faint text { fill: #c9bfcb; stroke: #f3faf2; stroke-width: 1px; }
.place.faint text.ca { font: 10px "DejaVu Sans", sans-serif; }
.city { font: 7.500px "DejaVu Sans", sans-serif; fill: #69806f; }
.city.pink { font-size: 9px; fill: #b989b5; }
.lab text { font: bold 12px "Noto Sans", sans-serif; fill: #555; text-anchor: end; stroke: #e8f5ec; stroke-width: 2px; paint-order: stroke; }
.bars { position: absolute; left: 10px; top: 10px; display: flex; flex-direction: column; align-items: flex-start; }
.bar { width: 34px; border: 2px solid #8aa7a6; border-radius: 5px; overflow: hidden; background: #fff; }
.bar span { display: block; height: 30px; }
.bar span + span { border-top: 1px solid #ccc; }
.bar svg { width: 30px; height: 30px; }
.bar span + span svg { margin-top: -2px; }
.bar .off { background: #f4f4f4; }
.zoom { height: 64px; }
.draw { height: 94px; margin-top: 10px; }
.edit { height: 63px; margin-top: 12px; }
.mb { width: 40px; height: 34px; border: 1px solid #ccc; border-radius: 4px; background: #fff; display: flex; align-items: center; justify-content: center; }
.mb svg { width: 14px; height: 14px; }
.bars .mb { margin-top: 11px; }
.bars .two { margin-top: 10px; }
.menu { position: absolute; left: 778px; top: 10px; }
.as { position: absolute; left: 844px; top: 330px; width: 34px; height: 34px; border: 2px solid #8aa7a6; border-radius: 4px; background: #fff; color: #000; font: bold 12px/30px "Noto Sans", sans-serif; text-align: center; }

.graphs { height: 541px; margin-bottom: 20px; }
.tabs { margin: 15px 5px 0; height: 42px; border-bottom: 1px solid #ddd; display: flex; align-items: flex-start; }
.tabs a { height: 42px; padding: 0 12.300px 0 16px; margin-right: 2px; color: #337ab7; display: flex; align-items: center; gap: 4px; }
.tabs .cur { color: #555; border: 1px solid #ddd; border-bottom-color: #fff; background: #fff; border-radius: 4px 4px 0 0; padding: 0 11px 0 15px; }
.controls { height: 43px; display: flex; }
.ds, .ex { display: flex; align-items: flex-start; }
.ds { width: 449px; padding: 5px 0 0 10px; }
.ds label { margin: 6px 10px 0 0; }
.ex { padding-left: 10px; }
.ex label { margin: 6px 10px 0 0; }
.chart text { font-family: "Liberation Sans", Arial, sans-serif; font-size: 10px; fill: #000; }
.yt text { text-anchor: end; }
.xt text { text-anchor: middle; }
.chart .leg text { font-size: 12px; }
.stat { height: 300px; }

.scroll { width: 15px; background: #f1f1f1; display: flex; flex-direction: column; align-items: center; }
.up { margin-top: 6px; border: 4px solid transparent; border-top: 0; border-bottom: 4px solid #888; }
.thumb { width: 12px; height: 615px; margin-top: 5px; background: #c1c1c1; }
.down { margin-top: auto; margin-bottom: 6px; border: 4px solid transparent; border-bottom: 0; border-top: 4px solid #505050; }

footer { height: 49px; border-top: 1px solid #ccc; padding-left: 20px; color: #444; }
.file { width: 16px; height: 18px; margin-top: -2px; }
.fname { font-size: 15.300px; margin-left: 13px; width: 113px; white-space: nowrap; }
.chev { width: 10px; height: 7px; margin-left: 40px; }
.sep { width: 1px; height: 36px; background: #c9c8c6; margin-left: 18px; }
.showall { margin-left: auto; margin-top: -2px; width: 90px; height: 30px; border: 1px solid #8d8c8a; border-radius: 3px; background: #e3e2e1; font: bold 14px/27px "Noto Sans", sans-serif; text-align: center; }
.fx { width: 11px; height: 11px; margin: -2px 13px 0 12px; }
```
